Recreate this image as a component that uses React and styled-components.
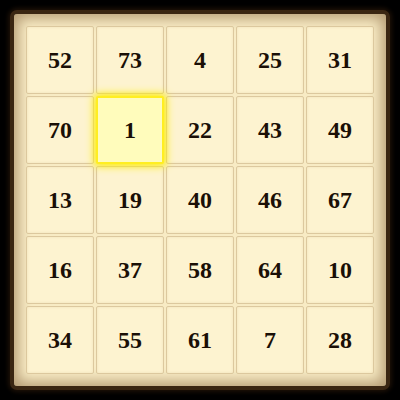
import React from 'react';
import styled, { createGlobalStyle } from 'styled-components';

const GlobalStyle = createGlobalStyle`
  html, body {
    margin: 0;
    padding: 0;
    background: #000;
  }
  body {
    width: 400px;
    height: 400px;
    font-family: "Liberation Serif", "DejaVu Serif", serif;
  }
`;

const Page = styled.div`
  width: 400px;
  height: 400px;
  display: flex;
  align-items: center;
  justify-content: center;
  background: #000;
`;

const Board = styled.div`
  box-sizing: border-box;
  width: 380px;
  height: 380px;
  padding: 12px;
  border: 4px solid #3a2612;
  border-radius: 7px;
  background: #f8ebc4;
  box-shadow: inset 0 0 14px 4px #b39a72, 0 0 4px 2px #1c1006;
  display: grid;
  grid-template-columns: repeat(5, 68px);
  grid-template-rows: repeat(5, 68px);
  gap: 2px;
`;

const Cell = styled.div`
  box-sizing: border-box;
  display: flex;
  align-items: center;
  justify-content: center;
  border: ${p => (p.$active ? '2px solid #ffee22' : '1px solid #dcc89e')};
  border-radius: 2px;
  background: ${p => (p.$active ? '#fffcbc' : '#fdf3d0')};
  box-shadow: ${p => (p.$active ? '0 0 8px 2px #fff000' : 'inset 0 0 3px #efe0b8')};
  position: relative;
  z-index: ${p => (p.$active ? 1 : 0)};
  color: #1a0f06;
  font-size: 24px;
  font-weight: bold;
`;

const numbers = [
  [52, 73, 4, 25, 31],
  [70, 1, 22, 43, 49],
  [13, 19, 40, 46, 67],
  [16, 37, 58, 64, 10],
  [34, 55, 61, 7, 28],
];

export default function App() {
  return (
    <Page>
      <GlobalStyle />
      <Board>
        {numbers.flat().map((n, i) => (
          <Cell key={i} $active={n === 1}>{n}</Cell>
        ))}
      </Board>
    </Page>
  );
}
